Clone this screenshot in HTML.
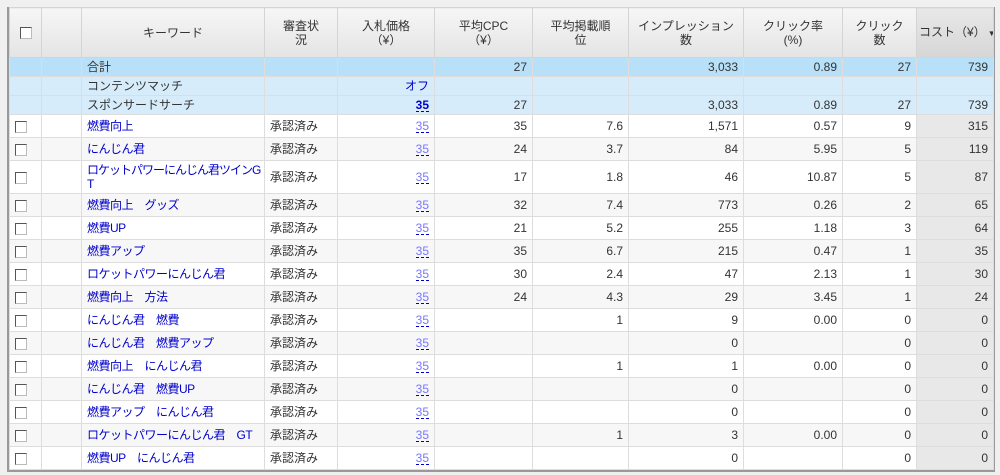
<!DOCTYPE html>
<html><head><meta charset="utf-8"><style>
body{margin:0;background:#f0f0f0;width:1000px;height:475px;overflow:hidden;font-family:"Liberation Sans","Noto Sans CJK JP",sans-serif;font-size:12px;color:#333}
.wrap{position:absolute;left:7px;top:7px;width:984px;border-left:2px solid #999;border-right:2px solid #999;border-bottom:2px solid #999;background:#fff}
table{border-collapse:collapse;table-layout:fixed;width:984px}
td,th{border:1px solid #ddd;padding:0 5px;white-space:nowrap;overflow:hidden;line-height:14px}
th{font-weight:normal;height:49px;background:linear-gradient(#f6f6f6,#e4e4e4);color:#333;text-align:center;border-color:#d4d4d4;padding:0 2px}
th.s{background:linear-gradient(#e8e8e8,#d6d6d6)}
tr.t td{background:#b8e0f8;height:18px}
tr.c td{background:#d6ecfa;height:18px}
tr.r td{height:22px}
tr.r:nth-child(even) td{background:#f7f7f7}
td.n{text-align:right}
td.k{color:#00c;letter-spacing:-0.5px}
tr.r td.cs{background:#e8e8e8}
.cb{display:inline-block;width:10px;height:10px;border:1px solid #555;border-right-color:#bbb;border-bottom-color:#bbb;background:#fff;vertical-align:middle}
.b{color:#77f;border-bottom:1px dashed #00c;line-height:12px;display:inline-block}
.bb{color:#00c;font-weight:bold;border-bottom:1px dashed #00c;line-height:12px;display:inline-block}
</style></head><body>
<div class="wrap"><table>
<colgroup><col style="width:32px"><col style="width:40px"><col style="width:183px"><col style="width:73px"><col style="width:97px"><col style="width:98px"><col style="width:96px"><col style="width:115px"><col style="width:99px"><col style="width:74px"><col style="width:77px"></colgroup>
<tr><th><span class="cb"></span></th><th></th><th>キーワード</th><th>審査状<br>況</th><th>入札価格<br>（¥）</th><th>平均CPC<br>（¥）</th><th>平均掲載順<br>位</th><th>インプレッション<br>数</th><th>クリック率<br>(%)</th><th>クリック<br>数</th><th class="s">コスト（¥）<span style="font-size:8px;margin-left:2px">▼</span></th></tr>
<tr class="t"><td></td><td></td><td>合計</td><td></td><td></td><td class="n">27</td><td></td><td class="n">3,033</td><td class="n">0.89</td><td class="n">27</td><td class="n">739</td></tr>
<tr class="c"><td></td><td></td><td>コンテンツマッチ</td><td></td><td class="n" style="color:#00c">オフ</td><td></td><td></td><td></td><td></td><td></td><td></td></tr>
<tr class="c"><td></td><td></td><td>スポンサードサーチ</td><td></td><td class="n"><span class="bb">35</span></td><td class="n">27</td><td></td><td class="n">3,033</td><td class="n">0.89</td><td class="n">27</td><td class="n">739</td></tr>
<tr class="r"><td><span class="cb"></span></td><td></td><td class="k">燃費向上</td><td>承認済み</td><td class="n"><span class="b">35</span></td><td class="n">35</td><td class="n">7.6</td><td class="n">1,571</td><td class="n">0.57</td><td class="n">9</td><td class="n cs">315</td></tr>
<tr class="r"><td><span class="cb"></span></td><td></td><td class="k">にんじん君</td><td>承認済み</td><td class="n"><span class="b">35</span></td><td class="n">24</td><td class="n">3.7</td><td class="n">84</td><td class="n">5.95</td><td class="n">5</td><td class="n cs">119</td></tr>
<tr class="r"><td style="height:32px"><span class="cb"></span></td><td></td><td class="k" style="letter-spacing:-1px">ロケットパワーにんじん君ツインG<br>T</td><td>承認済み</td><td class="n"><span class="b">35</span></td><td class="n">17</td><td class="n">1.8</td><td class="n">46</td><td class="n">10.87</td><td class="n">5</td><td class="n cs">87</td></tr>
<tr class="r"><td><span class="cb"></span></td><td></td><td class="k">燃費向上　グッズ</td><td>承認済み</td><td class="n"><span class="b">35</span></td><td class="n">32</td><td class="n">7.4</td><td class="n">773</td><td class="n">0.26</td><td class="n">2</td><td class="n cs">65</td></tr>
<tr class="r"><td><span class="cb"></span></td><td></td><td class="k">燃費UP</td><td>承認済み</td><td class="n"><span class="b">35</span></td><td class="n">21</td><td class="n">5.2</td><td class="n">255</td><td class="n">1.18</td><td class="n">3</td><td class="n cs">64</td></tr>
<tr class="r"><td><span class="cb"></span></td><td></td><td class="k">燃費アップ</td><td>承認済み</td><td class="n"><span class="b">35</span></td><td class="n">35</td><td class="n">6.7</td><td class="n">215</td><td class="n">0.47</td><td class="n">1</td><td class="n cs">35</td></tr>
<tr class="r"><td><span class="cb"></span></td><td></td><td class="k">ロケットパワーにんじん君</td><td>承認済み</td><td class="n"><span class="b">35</span></td><td class="n">30</td><td class="n">2.4</td><td class="n">47</td><td class="n">2.13</td><td class="n">1</td><td class="n cs">30</td></tr>
<tr class="r"><td><span class="cb"></span></td><td></td><td class="k">燃費向上　方法</td><td>承認済み</td><td class="n"><span class="b">35</span></td><td class="n">24</td><td class="n">4.3</td><td class="n">29</td><td class="n">3.45</td><td class="n">1</td><td class="n cs">24</td></tr>
<tr class="r"><td><span class="cb"></span></td><td></td><td class="k">にんじん君　燃費</td><td>承認済み</td><td class="n"><span class="b">35</span></td><td></td><td class="n">1</td><td class="n">9</td><td class="n">0.00</td><td class="n">0</td><td class="n cs">0</td></tr>
<tr class="r"><td><span class="cb"></span></td><td></td><td class="k">にんじん君　燃費アップ</td><td>承認済み</td><td class="n"><span class="b">35</span></td><td></td><td></td><td class="n">0</td><td></td><td class="n">0</td><td class="n cs">0</td></tr>
<tr class="r"><td><span class="cb"></span></td><td></td><td class="k">燃費向上　にんじん君</td><td>承認済み</td><td class="n"><span class="b">35</span></td><td></td><td class="n">1</td><td class="n">1</td><td class="n">0.00</td><td class="n">0</td><td class="n cs">0</td></tr>
<tr class="r"><td><span class="cb"></span></td><td></td><td class="k">にんじん君　燃費UP</td><td>承認済み</td><td class="n"><span class="b">35</span></td><td></td><td></td><td class="n">0</td><td></td><td class="n">0</td><td class="n cs">0</td></tr>
<tr class="r"><td><span class="cb"></span></td><td></td><td class="k">燃費アップ　にんじん君</td><td>承認済み</td><td class="n"><span class="b">35</span></td><td></td><td></td><td class="n">0</td><td></td><td class="n">0</td><td class="n cs">0</td></tr>
<tr class="r"><td><span class="cb"></span></td><td></td><td class="k">ロケットパワーにんじん君　GT</td><td>承認済み</td><td class="n"><span class="b">35</span></td><td></td><td class="n">1</td><td class="n">3</td><td class="n">0.00</td><td class="n">0</td><td class="n cs">0</td></tr>
<tr class="r"><td><span class="cb"></span></td><td></td><td class="k">燃費UP　にんじん君</td><td>承認済み</td><td class="n"><span class="b">35</span></td><td></td><td></td><td class="n">0</td><td></td><td class="n">0</td><td class="n cs">0</td></tr>
</table></div>
</body></html>
